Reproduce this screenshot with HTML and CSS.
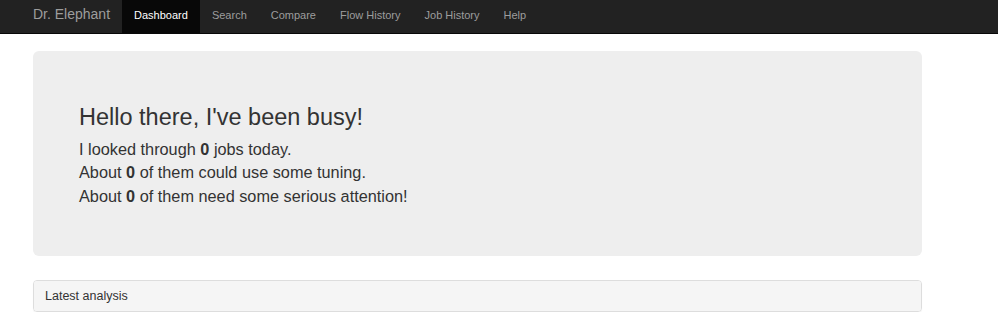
FILE: index.html
```html
<!DOCTYPE html>
<html lang="en">
  <head>
    <meta charset="UTF-8" />
    <meta name="viewport" content="width=device-width, initial-scale=1.0" />
    <title>Dr. Elephant</title>
    <link rel="stylesheet" href="styles.css">
  </head>
  <body>
    <nav class="navbar">
      <a class="brand" href="#">Dr. Elephant</a>
      <ul class="nav">
        <li class="active"><a href="#">Dashboard</a></li>
        <li><a href="#">Search</a></li>
        <li><a href="#">Compare</a></li>
        <li><a href="#">Flow History</a></li>
        <li><a href="#">Job History</a></li>
        <li><a href="#">Help</a></li>
      </ul>
    </nav>

    <div class="container">
      <div class="jumbotron">
        <h2>Hello there, I've been busy!</h2>
        <p>I looked through <b>0</b> jobs today.</p>
        <p>About <b>0</b> of them could use some tuning.</p>
        <p>About <b>0</b> of them need some serious attention!</p>
      </div>

      <div class="panel">
        <div class="panel-heading">Latest analysis</div>
      </div>
    </div>
  </body>
</html>
```

FILE: styles.css
```css
* {
  margin: 0;
  padding: 0;
  box-sizing: border-box;
}
body {
  font-family: "Liberation Sans", Arial, sans-serif;
  color: #333;
  background-color: #fff;
}
a {
  text-decoration: none;
}
.navbar {
  display: flex;
  height: 34px;
  padding-left: 33px;
  background-color: #222;
  border-bottom: 1px solid #080808;
}
.brand {
  font-size: 14px;
  line-height: 20px;
  padding: 4px 12px 9px 0;
  color: #9d9d9d;
}
.nav {
  display: flex;
  list-style: none;
}
.nav a {
  display: block;
  height: 33px;
  font-size: 11px;
  line-height: 20px;
  padding: 5px 12px 8px;
  color: #9d9d9d;
}
.nav .active a {
  color: #fff;
  background-color: #080808;
}
.container {
  width: 922px;
  padding-left: 33px;
}
.jumbotron {
  margin-top: 17px;
  padding: 52px 46px 48px;
  background-color: #eee;
  border-radius: 6px;
}
.jumbotron h2 {
  font-size: 23.5px;
  font-weight: normal;
  line-height: 28px;
  margin-bottom: 7px;
}
.jumbotron p {
  font-size: 16.3px;
  line-height: 23.3px;
}
.panel {
  margin-top: 24px;
  border: 1px solid #ddd;
  border-radius: 4px;
  box-shadow: 0 1px 1px rgba(0, 0, 0, 0.05);
}
.panel-heading {
  height: 30px;
  padding: 0 11px;
  font-size: 12.5px;
  line-height: 30px;
  background-color: #f5f5f5;
  border-radius: 3px;
}
```
